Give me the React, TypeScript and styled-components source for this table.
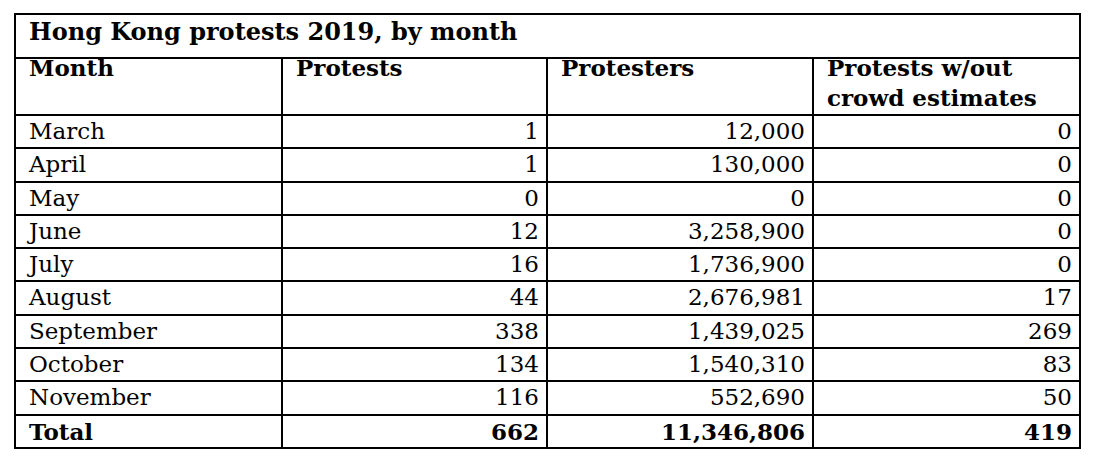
import React from 'react';
import styled, { createGlobalStyle } from 'styled-components';

const GlobalStyle = createGlobalStyle`
  html, body {
    margin: 0;
    padding: 0;
    background: #ffffff;
  }
  body {
    font-family: 'DejaVu Serif', 'Liberation Serif', serif;
    color: #000000;
  }
`;

type Row = {
  month: string;
  protests: string;
  protesters: string;
  noEstimate: string;
};

const rows: Row[] = [
  { month: 'March', protests: '1', protesters: '12,000', noEstimate: '0' },
  { month: 'April', protests: '1', protesters: '130,000', noEstimate: '0' },
  { month: 'May', protests: '0', protesters: '0', noEstimate: '0' },
  { month: 'June', protests: '12', protesters: '3,258,900', noEstimate: '0' },
  { month: 'July', protests: '16', protesters: '1,736,900', noEstimate: '0' },
  { month: 'August', protests: '44', protesters: '2,676,981', noEstimate: '17' },
  { month: 'September', protests: '338', protesters: '1,439,025', noEstimate: '269' },
  { month: 'October', protests: '134', protesters: '1,540,310', noEstimate: '83' },
  { month: 'November', protests: '116', protesters: '552,690', noEstimate: '50' },
];

const total: Row = { month: 'Total', protests: '662', protesters: '11,346,806', noEstimate: '419' };

const Page = styled.div`
  padding: 13px 0 0 14px;
`;

const Table = styled.table`
  border-collapse: collapse;
  table-layout: fixed;
  width: 1067px;
  border: 2px solid #000;
`;

const Col = styled.col`
  width: ${(props: { w: number }) => props.w}px;
`;

const TitleRow = styled.tr`
  height: 44px;
`;

const TitleCell = styled.td`
  border: 2px solid #000;
  padding: 0 7px 0 13px;
  vertical-align: top;
  font-weight: 700;
  font-size: 24px;
  line-height: 34px;
  white-space: nowrap;
`;

const HeadRow = styled.tr`
  height: 57px;
`;

const HeadCell = styled.th`
  border: 2px solid #000;
  padding: 0 7px 0 13px;
  vertical-align: top;
  text-align: left;
  font-weight: 700;
  font-size: 23px;
  line-height: 30px;
`;

const HeadText = styled.div`
  margin-top: -6px;
  white-space: nowrap;
`;

const DataRow = styled.tr`
  height: 33.3px;
`;

type CellProps = {
  $right?: boolean;
  $bold?: boolean;
};

const Cell = styled.td<CellProps>`
  border: 2px solid #000;
  padding: 0 7px 0 13px;
  vertical-align: top;
  text-align: ${(p) => (p.$right ? 'right' : 'left')};
  font-weight: ${(p) => (p.$bold ? 700 : 400)};
  font-size: 23px;
  line-height: 31px;
  white-space: nowrap;
`;

const BodyRow = ({ row, bold }: { row: Row; bold?: boolean }) => (
  <DataRow>
    <Cell $bold={bold}>{row.month}</Cell>
    <Cell $right $bold={bold}>{row.protests}</Cell>
    <Cell $right $bold={bold}>{row.protesters}</Cell>
    <Cell $right $bold={bold}>{row.noEstimate}</Cell>
  </DataRow>
);

export default function App() {
  return (
    <>
      <GlobalStyle />
      <Page>
        <Table>
          <colgroup>
            <Col w={267} />
            <Col w={265} />
            <Col w={266} />
            <Col w={267} />
          </colgroup>
          <thead>
            <TitleRow>
              <TitleCell colSpan={4}>Hong Kong protests 2019, by month</TitleCell>
            </TitleRow>
            <HeadRow>
              <HeadCell>
                <HeadText>Month</HeadText>
              </HeadCell>
              <HeadCell>
                <HeadText>Protests</HeadText>
              </HeadCell>
              <HeadCell>
                <HeadText>Protesters</HeadText>
              </HeadCell>
              <HeadCell>
                <HeadText>
                  Protests w/out
                  <br />
                  crowd estimates
                </HeadText>
              </HeadCell>
            </HeadRow>
          </thead>
          <tbody>
            {rows.map((r) => (
              <BodyRow key={r.month} row={r} />
            ))}
            <BodyRow row={total} bold />
          </tbody>
        </Table>
      </Page>
    </>
  );
}
